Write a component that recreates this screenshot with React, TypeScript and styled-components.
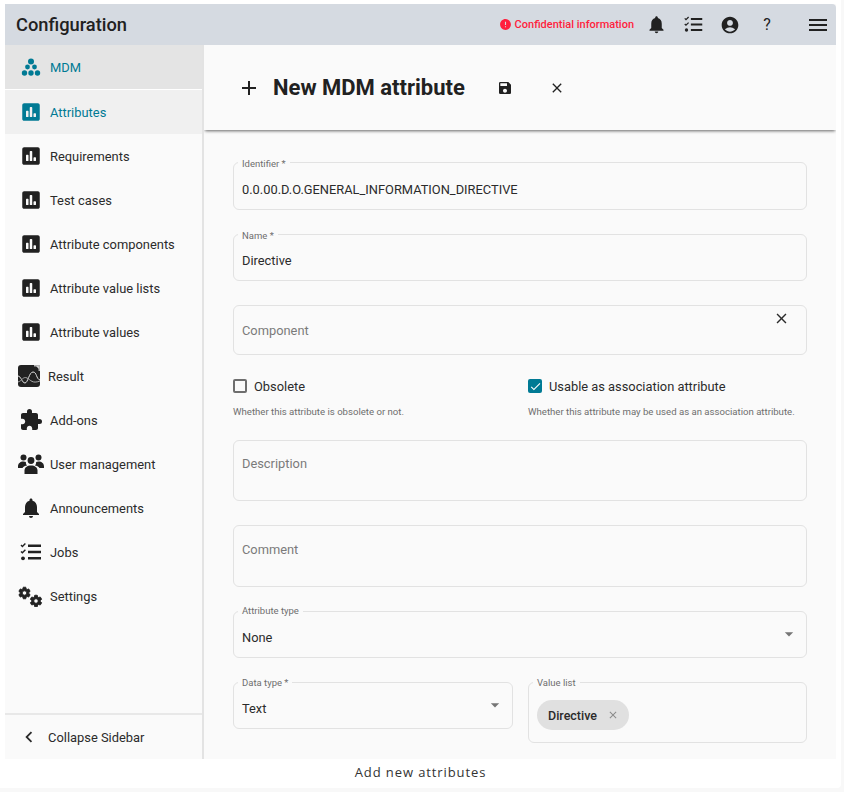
import React from "react";
import styled, { createGlobalStyle } from "styled-components";
import {
  MdAccountCircle,
  MdAdd,
  MdArrowDropDown,
  MdCheck,
  MdChevronLeft,
  MdClose,
  MdError,
  MdExtension,
  MdMenu,
  MdNotifications,
  MdSave,
} from "react-icons/md";
import { FaPoll } from "react-icons/fa";

const GlobalStyle = createGlobalStyle`
  html, body {
    margin: 0;
    padding: 0;
    background: #f8f8f8;
  }
  body {
    font-family: Roboto, "Liberation Sans", sans-serif;
    color: #212121;
  }
`;

const Page = styled.div`
  width: 841px;
  height: 788px;
  padding: 4px 5px 0 5px;
  box-sizing: border-box;
  overflow: hidden;
  background: #ffffff;
  border-radius: 0 0 4px 0;
`;

const Frame = styled.div`
  height: 755px;
  display: flex;
  flex-direction: column;
  background: #fafafa;
`;

const Header = styled.header`
  height: 41px;
  flex: none;
  display: flex;
  align-items: center;
  padding: 0 0 0 11px;
  background: #d5dae1;
  border-radius: 0 4px 0 0;
`;

const AppTitle = styled.div`
  font-size: 18.3px;
  font-weight: 500;
  flex: 1;
`;

const Confidential = styled.div`
  display: flex;
  align-items: center;
  gap: 3px;
  margin-right: 4px;
  font-size: 11px;
  font-weight: 500;
  color: #ff1f3d;
`;

const HeaderButton = styled.div<{ $width: number; $left?: number }>`
  width: ${(p) => p.$width}px;
  margin-left: ${(p) => p.$left ?? 0}px;
  display: flex;
  justify-content: center;
  align-items: center;
  font-size: 16px;
`;

const Body = styled.div`
  flex: 1;
  display: flex;
  min-height: 0;
`;

const Sidebar = styled.nav`
  width: 199px;
  flex: none;
  display: flex;
  flex-direction: column;
  box-sizing: border-box;
  border-right: 2px solid #e3e3e3;
  background: #fafafa;
`;

const NavList = styled.div`
  flex: 1;
`;

const NavRow = styled.div<{ $bg?: string; $active?: boolean; $first?: boolean }>`
  height: ${(p) => (p.$first ? 45 : 44)}px;
  display: flex;
  align-items: center;
  box-sizing: border-box;
  padding-left: 13px;
  font-size: 12.9px;
  background: ${(p) => p.$bg ?? "transparent"};
  border-bottom: ${(p) => (p.$first ? "1px solid #ffffff" : "none")};
  color: ${(p) => (p.$active ? "#007a94" : "#2b2b2b")};
`;

const NavIcon = styled.span<{ $left?: number }>`
  width: 26px;
  margin-left: ${(p) => p.$left ?? 0}px;
  margin-right: 6px;
  flex: none;
  display: flex;
  justify-content: center;
  align-items: center;
`;

const SidebarFooter = styled.div`
  height: 44px;
  flex: none;
  display: flex;
  align-items: center;
  gap: 8px;
  padding-left: 13px;
  border-top: 2px solid #e8e8e8;
  font-size: 12.9px;
  color: #2b2b2b;
`;

const Main = styled.main`
  flex: 1;
  min-width: 0;
  display: flex;
  flex-direction: column;
  overflow: hidden;
`;

const TitleBar = styled.div`
  height: 85px;
  flex: none;
  display: flex;
  align-items: center;
  padding-left: 33px;
  background: #fafafa;
  box-shadow: 0 2px 3px -1px rgba(0, 0, 0, 0.6);
  position: relative;
  z-index: 1;
`;

const PageTitle = styled.h1`
  margin: 0 0 0 12px;
  font-size: 22px;
  font-weight: 700;
  color: #212121;
`;

const TitleAction = styled.div<{ $left: number }>`
  display: flex;
  margin-left: ${(p) => p.$left}px;
`;

const Form = styled.div`
  flex: 1;
  display: flex;
  flex-direction: column;
  gap: 24px;
  padding: 32px 29px 0 29px;
  background: #fafafa;
`;

const Field = styled.div<{ $height: number }>`
  position: relative;
  height: ${(p) => p.$height}px;
  box-sizing: border-box;
  border: 1px solid #e2e2e2;
  border-radius: 6px;
  display: flex;
  align-items: center;
  padding: 0 8px;
  font-size: 12.85px;
  color: #2b2b2b;
`;

const FieldLabel = styled.span<{ $top?: number }>`
  position: absolute;
  top: ${(p) => p.$top ?? -5}px;
  left: 4px;
  padding: 0 4px;
  background: #fafafa;
  font-size: 9.5px;
  line-height: 12px;
  color: #6e6e6e;
`;

const Placeholder = styled.span<{ $up?: number }>`
  color: #7a7a7a;
  font-size: 12.85px;
  margin-top: ${(p) => -(p.$up ?? 0)}px;
`;

const FieldValue = styled.span`
  margin-top: 6px;
`;

const ClearButton = styled.span`
  position: absolute;
  top: 4px;
  right: 16px;
  display: flex;
`;

const Caret = styled.span`
  position: absolute;
  top: 12px;
  right: 7px;
  display: flex;
  color: #757575;
`;

const TwoColumns = styled.div<{ $tight?: boolean }>`
  display: grid;
  grid-template-columns: 280px 279px;
  column-gap: 15px;
  align-items: start;
  margin: ${(p) => (p.$tight ? "-3px 0 -2px" : "0")};
`;

const CheckColumn = styled.div`
  display: flex;
  flex-direction: column;
`;

const CheckRow = styled.div`
  display: flex;
  align-items: center;
  gap: 7px;
  height: 20px;
  font-size: 12.85px;
  color: #2b2b2b;
`;

const CheckBox = styled.span<{ $checked?: boolean }>`
  width: 14px;
  height: 14px;
  box-sizing: border-box;
  border-radius: 2px;
  border: ${(p) => (p.$checked ? "none" : "2px solid #6e6e6e")};
  background: ${(p) => (p.$checked ? "#007a94" : "transparent")};
  color: #ffffff;
  display: flex;
  align-items: center;
  justify-content: center;
`;

const HelpText = styled.div`
  margin-top: 10px;
  font-size: 9.6px;
  line-height: 12px;
  color: #6e6e6e;
`;

const Chip = styled.span`
  display: inline-flex;
  align-items: center;
  gap: 10px;
  height: 30px;
  padding: 0 10px 0 11px;
  margin-top: 5px;
  border-radius: 15px;
  background: #e0e0e0;
  font-size: 12.5px;
  font-weight: 500;
  color: #2b2b2b;
`;

const Caption = styled.div`
  margin-top: 4px;
  text-align: center;
  font-family: "Open Sans", sans-serif;
  font-size: 13px;
  line-height: 18px;
  letter-spacing: 0.9px;
  color: #333333;
`;

const MdmIcon = () => (
  <svg width="24" height="24" viewBox="0 0 24 24" fill="#007a94">
    <circle cx="12" cy="6.5" r="3" />
    <circle cx="8.5" cy="12" r="2.4" />
    <circle cx="15.5" cy="12" r="2.4" />
    <circle cx="5.5" cy="18" r="2.7" />
    <circle cx="12" cy="18" r="2.7" />
    <circle cx="18.5" cy="18" r="2.7" />
  </svg>
);

const ResultIcon = () => (
  <svg width="22" height="22" viewBox="0 0 22 22">
    <path d="M3 0h14l5 5v14a3 3 0 0 1-3 3H3a3 3 0 0 1-3-3V3a3 3 0 0 1 3-3z" fill="#212121" />
    <path d="M16 0h6v6h-1.5V1.5H16z" fill="#b5b5b5" />
    <path d="M0 11c3 0 4 7 7 7s4-11 8-11 3 7 7 8" stroke="#e0e0e0" strokeWidth="1" fill="none" />
    <path d="M0 17c4-1 5-6 9-4s5 6 13 3" stroke="#a8a8a8" strokeWidth="1" fill="none" />
  </svg>
);

const JobsIcon = ({ size }: { size: number }) => (
  <svg width={size} height={size} viewBox="0 0 24 24" fill="#212121">
    <path d="M9 4.5h13v2.4H9zM9 10.8h13v2.4H9zM9 17.1h13v2.4H9z" />
    <path d="M2 5l1.4 1.4L6.4 3.4" stroke="#212121" strokeWidth="1.4" fill="none" />
    <path d="M2 11.4l1.4 1.4 3-3" stroke="#212121" strokeWidth="1.4" fill="none" />
    <circle cx="4" cy="18.3" r="1.9" />
  </svg>
);

const UsersIcon = () => (
  <svg width="26" height="20" viewBox="0 0 26 20" fill="#212121">
    <circle cx="5.5" cy="3.4" r="3" />
    <circle cx="20.5" cy="3.4" r="3" />
    <circle cx="13" cy="6.5" r="3.4" />
    <path d="M6.5 20v-3.5c0-3 2.6-5 6.5-5s6.5 2 6.5 5V20z" />
    <path d="M0 12.5c0-3 2.2-5 5.5-5 1 0 1.7.2 2.4.5-.2 1.6.4 2.7 1.3 3.6-2 .4-3.8 1-4.7 2.4H0z" />
    <path d="M26 12.5c0-3-2.2-5-5.5-5-1 0-1.7.2-2.4.5.2 1.6-.4 2.7-1.3 3.6 2 .4 3.8 1 4.7 2.4H26z" />
  </svg>
);

const gearPath =
  "M19.14 12.94c.04-.3.06-.61.06-.94 0-.32-.02-.64-.07-.94l2.03-1.58c.18-.14.23-.41.12-.61l-1.92-3.32c-.12-.22-.37-.29-.59-.22l-2.39.96c-.5-.38-1.03-.7-1.62-.94l-.36-2.54c-.04-.24-.24-.41-.48-.41h-3.84c-.24 0-.43.17-.47.41l-.36 2.54c-.59.24-1.13.57-1.62.94l-2.39-.96c-.22-.08-.47 0-.59.22L2.74 8.87c-.12.21-.08.47.12.61l2.03 1.58c-.05.3-.09.63-.09.94s.02.64.07.94l-2.03 1.58c-.18.14-.23.41-.12.61l1.92 3.32c.12.22.37.29.59.22l2.39-.96c.5.38 1.03.7 1.62.94l.36 2.54c.05.24.24.41.48.41h3.84c.24 0 .44-.17.47-.41l.36-2.54c.59-.24 1.13-.56 1.62-.94l2.39.96c.22.08.47 0 .59-.22l1.92-3.32c.12-.22.07-.47-.12-.61l-2.01-1.58zM12 15.6c-1.98 0-3.6-1.62-3.6-3.6s1.62-3.6 3.6-3.6 3.6 1.62 3.6 3.6-1.62 3.6-3.6 3.6z";

const SettingsIcon = () => (
  <svg width="26" height="22" viewBox="0 0 26 22" fill="#212121" stroke="#212121" strokeWidth="1.5">
    <path d={gearPath} transform="translate(-0.7 0.8) scale(0.6)" />
    <path d={gearPath} transform="translate(10.8 8.8) scale(0.6)" />
  </svg>
);

const pollItems = [
  "Requirements",
  "Test cases",
  "Attribute components",
  "Attribute value lists",
  "Attribute values",
];

export default function App() {
  return (
    <Page>
      <GlobalStyle />
      <Frame>
        <Header>
          <AppTitle>Configuration</AppTitle>
          <Confidential>
            <MdError size={13} />
            Confidential information
          </Confidential>
          <HeaderButton $width={36}>
            <MdNotifications size={21} />
          </HeaderButton>
          <HeaderButton $width={38}>
            <JobsIcon size={21} />
          </HeaderButton>
          <HeaderButton $width={36}>
            <MdAccountCircle size={20} />
          </HeaderButton>
          <HeaderButton $width={38}>?</HeaderButton>
          <HeaderButton $width={36} $left={14}>
            <MdMenu size={24} />
          </HeaderButton>
        </Header>
        <Body>
          <Sidebar>
            <NavList>
              <NavRow $bg="#e4e4e4" $active $first>
                <NavIcon>
                  <MdmIcon />
                </NavIcon>
                MDM
              </NavRow>
              <NavRow $bg="#f0f0f0" $active>
                <NavIcon>
                  <FaPoll size={20} color="#007a94" />
                </NavIcon>
                Attributes
              </NavRow>
              {pollItems.map((label) => (
                <NavRow key={label}>
                  <NavIcon>
                    <FaPoll size={20} color="#212121" />
                  </NavIcon>
                  {label}
                </NavRow>
              ))}
              <NavRow>
                <NavIcon $left={-2}>
                  <ResultIcon />
                </NavIcon>
                Result
              </NavRow>
              <NavRow>
                <NavIcon>
                  <MdExtension size={24} color="#212121" />
                </NavIcon>
                Add-ons
              </NavRow>
              <NavRow>
                <NavIcon>
                  <UsersIcon />
                </NavIcon>
                User management
              </NavRow>
              <NavRow>
                <NavIcon>
                  <MdNotifications size={24} color="#212121" />
                </NavIcon>
                Announcements
              </NavRow>
              <NavRow>
                <NavIcon>
                  <JobsIcon size={24} />
                </NavIcon>
                Jobs
              </NavRow>
              <NavRow>
                <NavIcon>
                  <SettingsIcon />
                </NavIcon>
                Settings
              </NavRow>
            </NavList>
            <SidebarFooter>
              <MdChevronLeft size={22} />
              Collapse Sidebar
            </SidebarFooter>
          </Sidebar>
          <Main>
            <TitleBar>
              <MdAdd size={24} />
              <PageTitle>New MDM attribute</PageTitle>
              <TitleAction $left={32}>
                <MdSave size={16} />
              </TitleAction>
              <TitleAction $left={36}>
                <MdClose size={16} />
              </TitleAction>
            </TitleBar>
            <Form>
              <Field $height={48}>
                <FieldLabel>Identifier *</FieldLabel>
                <FieldValue>0.0.00.D.O.GENERAL_INFORMATION_DIRECTIVE</FieldValue>
              </Field>
              <Field $height={47}>
                <FieldLabel>Name *</FieldLabel>
                <FieldValue>Directive</FieldValue>
              </Field>
              <Field $height={50}>
                <Placeholder>Component</Placeholder>
                <ClearButton>
                  <MdClose size={17} />
                </ClearButton>
              </Field>
              <TwoColumns $tight>
                <CheckColumn>
                  <CheckRow>
                    <CheckBox />
                    Obsolete
                  </CheckRow>
                  <HelpText>Whether this attribute is obsolete or not.</HelpText>
                </CheckColumn>
                <CheckColumn>
                  <CheckRow>
                    <CheckBox $checked>
                      <MdCheck size={13} />
                    </CheckBox>
                    Usable as association attribute
                  </CheckRow>
                  <HelpText>Whether this attribute may be used as an association attribute.</HelpText>
                </CheckColumn>
              </TwoColumns>
              <Field $height={61}>
                <Placeholder $up={14}>Description</Placeholder>
              </Field>
              <Field $height={62}>
                <Placeholder $up={14}>Comment</Placeholder>
              </Field>
              <Field $height={47}>
                <FieldLabel $top={-7}>Attribute type</FieldLabel>
                <FieldValue>None</FieldValue>
                <Caret>
                  <MdArrowDropDown size={20} />
                </Caret>
              </Field>
              <TwoColumns>
                <Field $height={47}>
                  <FieldLabel $top={-6}>Data type *</FieldLabel>
                  <FieldValue>Text</FieldValue>
                  <Caret>
                    <MdArrowDropDown size={20} />
                  </Caret>
                </Field>
                <Field $height={61}>
                  <FieldLabel $top={-6}>Value list</FieldLabel>
                  <Chip>
                    Directive
                    <MdClose size={12} color="#8a8a8a" />
                  </Chip>
                </Field>
              </TwoColumns>
            </Form>
          </Main>
        </Body>
      </Frame>
      <Caption>Add new attributes</Caption>
    </Page>
  );
}
